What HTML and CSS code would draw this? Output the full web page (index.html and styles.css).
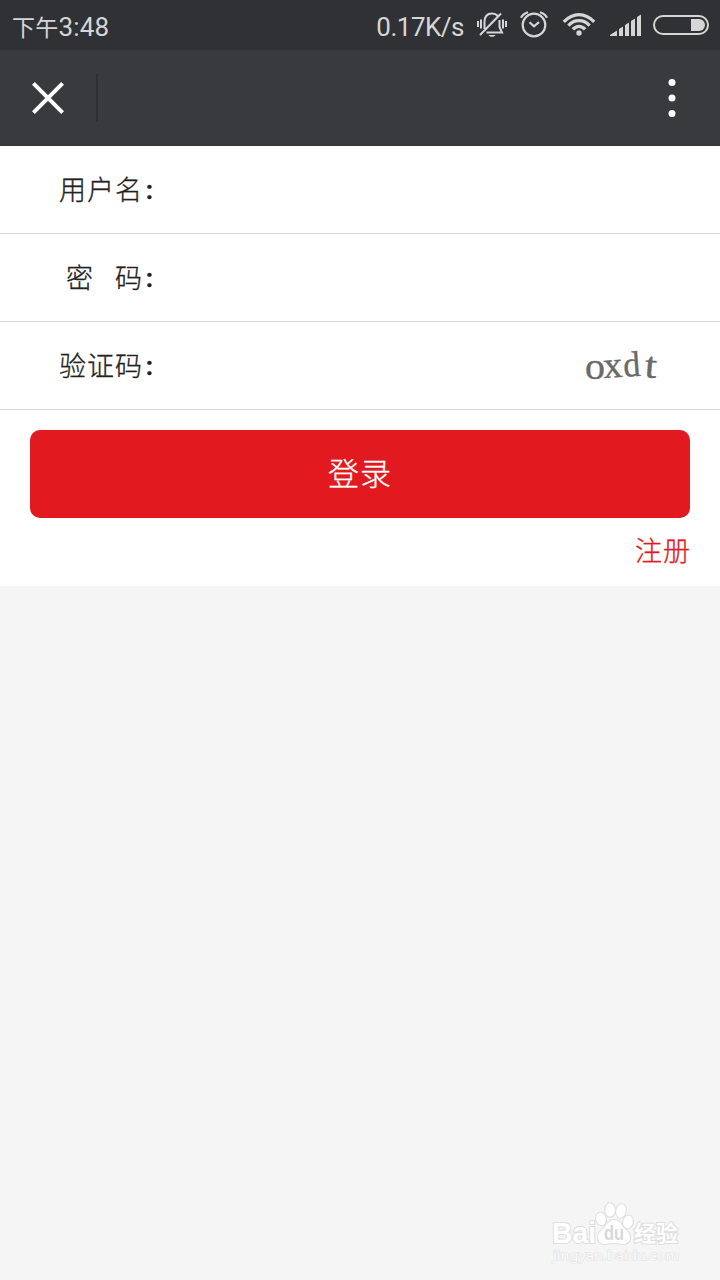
FILE: index.html
```html
<!DOCTYPE html>
<html lang="zh-CN">
  <head>
    <meta charset="UTF-8" />
    <meta name="viewport" content="width=device-width, initial-scale=1.0" />
    <title>登录</title>
    <link rel="stylesheet" href="styles.css">
  </head>
  <body>
    <!-- 状态栏 -->
    <div class="status-bar">
      <span class="time"><span class="period">下午</span>3:48</span>
      <span class="speed">0.17K/s</span>
      <svg class="icon-mute" width="30" height="28" viewBox="0 0 30 28" fill="none" stroke="#d6d6d6" stroke-width="2">
        <path d="M1 10v6M4 8.500v9M26 8.500v9M29 10v6" />
        <path d="M7.500 18V11C7.500 5.500 10.500 2.500 15 2.500C17.500 2.500 19.500 3.500 20.800 5M22.500 9V16L25 21.500H9.500M3 24L24 2.500" />
        <path d="M11.500 24h7c-1 2.400-6 2.400-7 0z" fill="#d6d6d6" stroke="none" />
      </svg>
      <svg class="icon-alarm" width="28" height="28" viewBox="0 0 28 28" fill="none" stroke="#d6d6d6" stroke-width="2.200">
        <circle cx="14" cy="15" r="11.300" />
        <path d="M9.500 12.200l4.500 4.100 5-4.100M1 7.700Q3 3.700 8 2.200M27 7.700Q25 3.700 20 2.200" />
      </svg>
      <svg class="icon-wifi" width="34" height="24" viewBox="0 0 34 24" fill="none" stroke="#d6d6d6" stroke-width="3.300">
        <path d="M1.800 9.800Q9 2.700 17 2.700T32.200 9.800M6.400 13.600Q11 8.700 17 8.700T27.600 13.600M10.900 17.400Q13.500 14.300 17 14.300T23.100 17.400" />
        <circle cx="17" cy="21" r="2.700" fill="#d6d6d6" stroke="none" />
      </svg>
      <svg class="icon-signal" width="32" height="22" viewBox="0 0 32 22" fill="#d6d6d6">
        <path d="M0 22v-1l7-4.500v5.500zM9 22v-7l4-2.600v9.600zM15 22V11l4-2.600V22zM21 22V7l4-2.600V22zM27 22V3l4-2.600V22z" />
      </svg>
      <svg class="icon-battery" width="56" height="20" viewBox="0 0 56 20">
        <rect x="1" y="1" width="54" height="18" rx="9" fill="none" stroke="#d6d6d6" stroke-width="2" />
        <path d="M38 4h8a6 6 0 0 1 0 12h-8z" fill="#d6d6d6" />
      </svg>
    </div>

    <!-- 导航栏 -->
    <div class="nav-bar">
      <button class="close-btn" aria-label="关闭">
        <svg width="32" height="32" viewBox="0 0 32 32" stroke="#fff" stroke-width="4">
          <path d="M1.400 1.400l29.200 29.200M30.600 1.400L1.400 30.600" />
        </svg>
      </button>
      <button class="more-btn" aria-label="更多">
        <svg width="8" height="40" viewBox="0 0 8 40" fill="#fff">
          <circle cx="4" cy="4.600" r="3.500" />
          <circle cx="4" cy="20" r="3.500" />
          <circle cx="4" cy="35.400" r="3.500" />
        </svg>
      </button>
    </div>

    <form class="login-form">
      <div class="form-row">
        <label for="username">用户名<span class="colon">:</span></label>
        <input type="text" id="username" />
      </div>
      <div class="form-row">
        <label for="password">密<span class="gap"></span>码<span class="colon">:</span></label>
        <input type="password" id="password" />
      </div>
      <div class="form-row">
        <label for="code">验证码<span class="colon">:</span></label>
        <input type="text" id="code" />
        <svg class="captcha" width="76" height="60" viewBox="0 0 76 60">
          <text x="1" y="43" textLength="20" lengthAdjust="spacingAndGlyphs">o</text>
          <text x="20" y="42" transform="rotate(-4 20 42)" textLength="19" lengthAdjust="spacingAndGlyphs">x</text>
          <text class="small" x="40" y="41" transform="rotate(-4 40 41)" textLength="17" lengthAdjust="spacingAndGlyphs">d</text>
          <text x="60" y="41" transform="rotate(5 60 41)" textLength="12" lengthAdjust="spacingAndGlyphs">t</text>
        </svg>
      </div>
      <button type="button" class="login-btn">登录</button>
      <a class="register">注册</a>
    </form>

    <!-- 右下角水印 -->
    <svg class="watermark" width="136" height="72" viewBox="0 0 136 72">
      <g class="mark">
        <text class="brand" x="2" y="44" textLength="44" lengthAdjust="spacingAndGlyphs">Bai</text>
        <ellipse cx="51" cy="20" rx="4.800" ry="6.300" transform="rotate(-12 51 20)" />
        <ellipse cx="60" cy="11" rx="4.800" ry="6.800" />
        <ellipse cx="71" cy="12" rx="4.800" ry="6.800" transform="rotate(10 71 12)" />
        <ellipse cx="78" cy="23" rx="4.800" ry="6.300" transform="rotate(12 78 23)" />
        <path d="M64 21c5 0 7 4 10 8 3 3 6 5 6 9 0 5-3 7-7 7-3 0-5-1-9-1s-6 1-9 1c-4 0-7-2-7-7 0-4 3-6 6-9 3-4 5-8 10-8z" />
        <text class="brand-cn" x="84" y="42" textLength="44" lengthAdjust="spacingAndGlyphs">经验</text>
      </g>
      <text class="du" x="54" y="41" textLength="20" lengthAdjust="spacingAndGlyphs">du</text>
      <text class="site" x="3" y="61" textLength="126" lengthAdjust="spacingAndGlyphs">jingyan.baidu.com</text>
    </svg>
  </body>
</html>
```
FILE: styles.css
```css
* {
  box-sizing: border-box;
}
body {
  margin: 0;
  min-height: 100vh;
  background-color: #f5f5f5;
  font-family: "Noto Sans CJK SC", sans-serif;
  color: #222;
  overflow: hidden;
}
button {
  border: none;
  padding: 0;
  background: none;
  font-family: inherit;
}

/* 状态栏 */
.status-bar {
  display: flex;
  height: 50px;
  padding: 0 11px 0 12px;
  background-color: #303134;
  color: #d6d6d6;
  font-family: Roboto, "Noto Sans CJK SC", sans-serif;
  font-size: 26px;
  line-height: 54px;
}
.time {
  flex: 1;
  letter-spacing: 0.2px;
}
.period {
  font-size: 23px;
}
.speed {
  margin-right: 13px;
  letter-spacing: -0.5px;
}
.icon-mute {
  margin: 11px 13px 0 0;
}
.icon-alarm {
  margin: 10px 14px 0 0;
}
.icon-wifi {
  margin: 12px 14px 0 0;
}
.icon-signal {
  margin: 14px 11px 0 0;
}
.icon-battery {
  margin-top: 15px;
}

/* 导航栏 */
.nav-bar {
  display: flex;
  align-items: center;
  justify-content: space-between;
  height: 96px;
  background-color: #393a3e;
  border-bottom: 1px solid #353139;
}
.close-btn {
  width: 98px;
  height: 48px;
  border-right: 2px solid #2e2f32;
  text-align: center;
}
.close-btn svg,
.more-btn svg {
  display: block;
  margin: 0 auto;
}
.more-btn {
  width: 96px;
}

/* 登录表单 */
.login-form {
  height: 440px;
  background-color: #fff;
  font-weight: 300;
  -webkit-text-stroke: 0.3px;
}
.form-row {
  display: flex;
  align-items: center;
  height: 88px;
  border-bottom: 1px solid #d9d9d9;
}
.form-row label {
  display: flex;
  justify-content: flex-end;
  width: 157px;
  padding-bottom: 1px;
  font-size: 27px;
  letter-spacing: 1px;
  line-height: 40px;
}
.colon {
  width: 14px;
  padding-top: 1px;
  text-align: center;
  font-family: Roboto, sans-serif;
  font-size: 26px;
  font-weight: 700;
}
.gap {
  width: 21px;
}
.form-row input {
  flex: 1;
  min-width: 0;
  height: 60px;
  border: none;
  outline: none;
  font-size: 28px;
}
.captcha {
  margin-right: 60px;
}
.captcha text {
  font-family: "Liberation Serif", serif;
  font-size: 37px;
  font-weight: 400;
  fill: #6a6a6a;
  stroke: #6a6a6a;
  stroke-width: 0.4;
}
.captcha .small {
  font-size: 36px;
}
.login-btn {
  display: block;
  width: 660px;
  height: 88px;
  margin: 20px auto 0;
  padding-bottom: 5px;
  border-radius: 10px;
  background-color: #e2191e;
  color: #fff;
  font-size: 31px;
  letter-spacing: 1px;
  font-weight: 300;
  -webkit-text-stroke: 0.3px;
}
.register {
  display: block;
  margin: 12px 29px 0 0;
  text-align: right;
  font-size: 27px;
  letter-spacing: 1px;
  line-height: 40px;
  color: #e2191e;
}

/* 水印 */
.watermark {
  position: absolute;
  right: 34px;
  bottom: 9px;
}
.mark {
  fill: #fff;
  stroke: #dedede;
  stroke-width: 2;
  paint-order: stroke;
}
.brand {
  font: bold 29px "Liberation Sans", sans-serif;
}
.brand-cn {
  font: bold 22px "Noto Sans CJK SC", sans-serif;
}
.du {
  font: bold 20px "Liberation Sans", sans-serif;
  fill: #d8d8d8;
}
.site {
  font: 13px "Noto Sans", sans-serif;
  fill: #fafafa;
  stroke: #e3e3e3;
  stroke-width: 1.2;
  paint-order: stroke;
}
```
